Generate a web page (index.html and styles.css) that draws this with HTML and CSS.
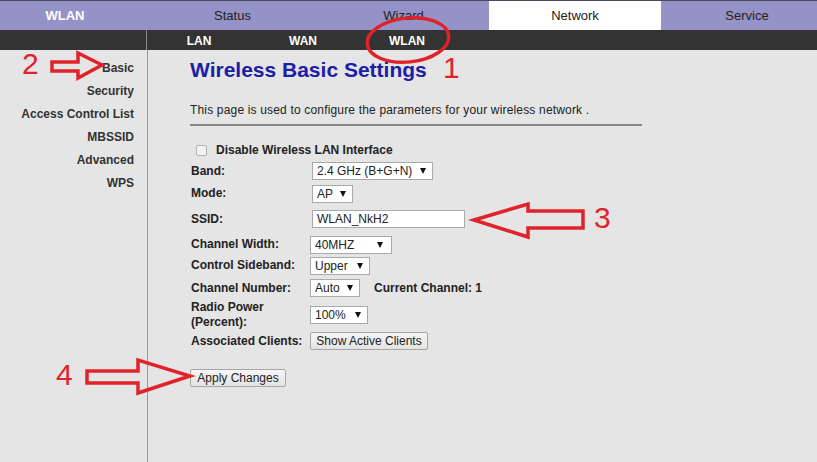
FILE: index.html
```html
<!DOCTYPE html>
<html>
<head>
<meta charset="utf-8">
<title>Wireless Basic Settings</title>
<link rel="stylesheet" href="styles.css">
</head>
<body>
<div class="page">
  <nav class="topnav">
    <div class="tab tab-section">WLAN</div>
    <div class="tab">Status</div>
    <div class="tab">Wizard</div>
    <div class="tab tab-active">Network</div>
    <div class="tab">Service</div>
  </nav>
  <nav class="subnav">
    <div class="subnav-blank"></div>
    <a class="sublink">LAN</a>
    <a class="sublink">WAN</a>
    <a class="sublink">WLAN</a>
  </nav>
  <div class="main">
    <aside class="sidebar">
      <a class="side-link">Basic</a>
      <a class="side-link">Security</a>
      <a class="side-link">Access Control List</a>
      <a class="side-link">MBSSID</a>
      <a class="side-link">Advanced</a>
      <a class="side-link">WPS</a>
    </aside>
    <section class="content">
      <h1 class="title">Wireless Basic Settings</h1>
      <p class="desc">This page is used to configure the parameters for your wireless network .</p>
      <hr class="rule">
      <div class="form">
        <div class="check-row"><span class="checkbox"></span><span class="label">Disable Wireless LAN Interface</span></div>
        <div class="label">Band:</div>
        <div class="ctl ctl-in"><span class="select w-band">2.4 GHz (B+G+N)<i class="arr"></i></span></div>
        <div class="label">Mode:</div>
        <div class="ctl ctl-in"><span class="select w-mode">AP<i class="arr"></i></span></div>
        <div class="label">SSID:</div>
        <div class="ctl ctl-in"><span class="input w-ssid">WLAN_NkH2</span></div>
        <div class="label">Channel Width:</div>
        <div class="ctl"><span class="select w-cw">40MHZ<i class="arr"></i></span></div>
        <div class="label">Control Sideband:</div>
        <div class="ctl"><span class="select w-cs">Upper<i class="arr"></i></span></div>
        <div class="label">Channel Number:</div>
        <div class="ctl"><span class="select w-cn">Auto<i class="arr"></i></span><span class="cur">Current Channel: 1</span></div>
        <div class="label label-2">Radio Power<br>(Percent):</div>
        <div class="ctl"><span class="select w-rp">100%<i class="arr"></i></span></div>
        <div class="label">Associated Clients:</div>
        <div class="ctl"><button class="btn w-show">Show Active Clients</button></div>
      </div>
      <button class="btn apply">Apply Changes</button>
    </section>
  </div>
  <svg class="annot" width="817" height="462" viewBox="0 0 817 462">
    <g fill="none" stroke="#e0232b" stroke-width="3.5" stroke-linejoin="miter">
      <ellipse cx="408" cy="40" rx="41" ry="22" transform="rotate(-6 408 40)"/>
      <polygon points="52,62 78,62 78,53 102,65 78,78 78,71 52,71"/>
      <polygon points="474,220 528,204 528,211 583,211 583,228 528,228 528,237"/>
      <polygon points="87,371 138,371 138,360 190,376 138,393 138,383 87,383"/>
    </g>
    <g fill="#e0232b" font-family="Liberation Sans, Arial, sans-serif" font-size="30">
      <text x="443" y="78">1</text>
      <text x="22" y="74">2</text>
      <text x="594" y="228">3</text>
      <text x="56" y="385">4</text>
    </g>
  </svg>
</div>
</body>
</html>
```
FILE: styles.css
```css
* { box-sizing: border-box; }
html, body { margin: 0; padding: 0; }
body {
  font-family: "Liberation Sans", Arial, sans-serif;
  font-size: 12px;
  color: #222;
  background: #e5e5e5;
}
.page {
  position: relative;
  width: 817px;
  height: 462px;
  overflow: hidden;
  display: flex;
  flex-direction: column;
}
.topnav {
  display: grid;
  grid-template-columns: 147px 171px 171px 172px 172px;
  height: 30px;
  background: #9492c7;
  border-top: 1px solid #4a4a5a;
  flex: none;
}
.tab {
  display: flex;
  align-items: center;
  justify-content: center;
  font-size: 13px;
  color: #222;
}
.tab-section {
  color: #fff;
  font-weight: bold;
  padding-right: 17px;
}
.tab-active { background: #fff; }
.subnav {
  display: grid;
  grid-template-columns: 147px 104px 104px 104px;
  height: 20px;
  background: #333;
  flex: none;
}
.subnav-blank { border-right: 1px solid #8a8a8a; }
.sublink {
  display: flex;
  align-items: center;
  justify-content: center;
  color: #fff;
  font-weight: bold;
  font-size: 12px;
  padding-top: 1px;
}
.main {
  flex: 1;
  display: flex;
}
.sidebar {
  width: 148px;
  border-right: 1px solid #999;
  padding: 7px 13px 0 0;
  display: flex;
  flex-direction: column;
  align-items: flex-end;
}
.side-link {
  font-weight: bold;
  color: #333;
  line-height: 23px;
}
.content {
  padding-left: 42px;
  padding-top: 8px;
}
.title {
  margin: 0;
  font-size: 21px;
  line-height: 24px;
  color: #1b20a4;
  font-weight: bold;
}
.desc {
  margin: 21px 0 0 0;
  line-height: 14px;
  letter-spacing: 0.17px;
}
.rule {
  margin: 7px 0 0 0;
  width: 452px;
  border: 0;
  border-top: 2px solid #888;
  height: 0;
}
.form {
  margin-top: 14px;
  display: grid;
  grid-template-columns: 120px auto;
  grid-template-rows: 20px 22px 23px 28px 23px 19px 26px 27px 26px;
  align-items: center;
}
.label {
  font-weight: bold;
  color: #222;
  padding-left: 1px;
  line-height: 13px;
  white-space: nowrap;
}
.label-2 { line-height: 15px; }
.check-row {
  grid-column: 1 / 3;
  display: flex;
  align-items: center;
  padding-left: 6px;
}
.checkbox {
  width: 11px;
  height: 11px;
  border: 1px solid #b2b2b2;
  border-radius: 2px;
  background: #f2f2f2;
  margin-right: 8px;
}
.ctl {
  display: flex;
  align-items: center;
}
.ctl-in { padding-left: 2px; }
.select, .input {
  display: flex;
  align-items: center;
  height: 18px;
  background: #fff;
  border: 1px solid #a9a9a9;
  padding: 0 6px 0 4px;
  font-size: 12px;
  color: #222;
}
.arr {
  margin-left: auto;
  width: 0;
  height: 0;
  border-left: 3.5px solid transparent;
  border-right: 3.5px solid transparent;
  border-top: 6px solid #111;
}
.w-band { width: 121px; }
.w-mode { width: 41px; }
.w-ssid { width: 153px; }
.w-cw { width: 82px; padding-right: 8px; }
.w-cs { width: 60px; }
.w-cn { width: 50px; }
.w-rp { width: 58px; }
.cur {
  margin-left: 14px;
  font-weight: bold;
}
.btn {
  font-family: "Liberation Sans", Arial, sans-serif;
  font-size: 12px;
  color: #222;
  height: 18px;
  padding: 0 5px;
  white-space: nowrap;
  background: linear-gradient(#f6f6f6, #e3e3e3);
  border: 1px solid #a6a6a6;
  border-radius: 2px;
}
.w-show { width: 118px; padding: 0 2px; }
.apply {
  display: block;
  width: 96px;
  margin-top: 15px;
}
.annot {
  position: absolute;
  left: 0;
  top: 0;
  pointer-events: none;
}
```
